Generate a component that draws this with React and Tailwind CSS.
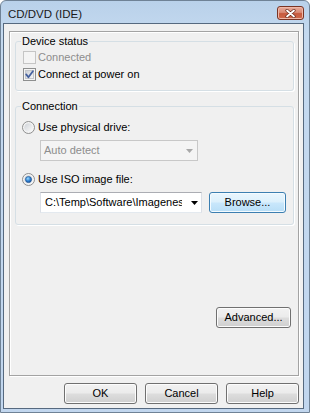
import React from "react";

function CheckBox({ checked, disabled }) {
  if (disabled) {
    return (
      <svg width="13" height="13" viewBox="0 0 13 13" className="shrink-0">
        <rect x="0.5" y="0.5" width="12" height="12" fill="#f4f4f4" stroke="#c5c5c5" />
      </svg>
    );
  }
  return (
    <svg width="13" height="13" viewBox="0 0 13 13" className="shrink-0">
      <defs>
        <linearGradient id="cbg" x1="0" y1="0" x2="1" y2="1">
          <stop offset="0" stopColor="#cbcfd5" />
          <stop offset="1" stopColor="#f7f7f7" />
        </linearGradient>
      </defs>
      <rect x="0.5" y="0.5" width="12" height="12" fill="#f4f4f4" stroke="#8e8f8f" />
      <rect x="2.5" y="2.5" width="8" height="8" fill="url(#cbg)" stroke="#c3c6cb" />
      {checked && (
        <path d="M3.2 6.4 L5.4 9.2 L9.9 3.3" fill="none" stroke="#44609f" strokeWidth="1.8" strokeLinecap="round" strokeLinejoin="round" />
      )}
    </svg>
  );
}

function Radio({ checked, id }) {
  return (
    <svg width="13" height="13" viewBox="0 0 13 13" className="shrink-0">
      <defs>
        <linearGradient id={`rg${id}`} x1="0" y1="0" x2="1" y2="1">
          <stop offset="0" stopColor="#ced2d7" />
          <stop offset="1" stopColor="#fbfbfb" />
        </linearGradient>
        <radialGradient id={`rb${id}`} cx="0.4" cy="0.35" r="0.7">
          <stop offset="0" stopColor="#9fdcfd" />
          <stop offset="0.55" stopColor="#2e82d4" />
          <stop offset="1" stopColor="#174c92" />
        </radialGradient>
      </defs>
      <circle cx="6.5" cy="6.5" r="6" fill="#f4f4f4" stroke="#8e8f8f" />
      <circle cx="6.5" cy="6.5" r="4.3" fill={`url(#rg${id})`} />
      {checked && <circle cx="6.5" cy="6.5" r="3.1" fill={`url(#rb${id})`} stroke="#1d4f8c" strokeWidth="0.6" />}
    </svg>
  );
}

function Arrow({ color }) {
  return (
    <svg width="7" height="4" viewBox="0 0 7 4" className="shrink-0">
      <path d="M0 0 H7 L3.5 4 Z" fill={color} />
    </svg>
  );
}

function Button({ children, className = "" }) {
  return (
    <div
      className={`h-[21px] flex items-center justify-center rounded-[3px] border border-[#707070] bg-[linear-gradient(#f2f2f2_0%,#ebebeb_48%,#dddddd_52%,#cfcfcf_100%)] shadow-[inset_0_0_0_1px_#fcfcfc] text-[#000] ${className}`}
    >
      {children}
    </div>
  );
}

export default function App() {
  return (
    <div className="w-[310px] h-[413px] flex flex-col border border-[#6f8296] rounded-t-[6px] bg-[linear-gradient(#b9d1ea_0%,#c4d9ef_8%,#c1d6ee_100%)] font-['Liberation_Sans',Arial,sans-serif] text-[11px] leading-[15px] text-[#000] overflow-hidden">
      {/* Title bar */}
      <div className="h-[22px] shrink-0 flex items-start justify-between pt-[6px] pl-[7px] pr-[5px]">
        <span className="text-[11.5px] leading-[15px] text-[#1a1a1a]">CD/DVD (IDE)</span>
        <div className="w-[27px] h-[14px] -mt-[1px] rounded-[3px] border border-[#7a3424] bg-[linear-gradient(#e9ac9c_0%,#d98a75_45%,#c75a3e_55%,#cf6a4c_100%)] shadow-[inset_0_0_0_1px_#efb8a8] flex items-center justify-center">
          <svg width="11" height="9" viewBox="0 0 11 9">
            <path d="M2 1.5 L9 7.5 M9 1.5 L2 7.5" stroke="#6a2a1c" strokeWidth="3.2" strokeLinecap="round" />
            <path d="M2 1.5 L9 7.5 M9 1.5 L2 7.5" stroke="#ffffff" strokeWidth="1.8" strokeLinecap="round" />
          </svg>
        </div>
      </div>

      {/* Client area */}
      <div className="flex-1 ml-[2px] mr-[5px] mb-[3px] border border-[#56697f] bg-[#f0f0f0] flex flex-col pt-[7px] pl-[5px] pr-[4px] pb-[4px]">
        {/* Panel */}
        <div className="flex-1 flex flex-col border border-[#a3a3a3] shadow-[inset_1px_1px_0_#ffffff,1px_1px_0_#ffffff]">
          {/* Device status */}
          <fieldset className="mt-[2px] ml-[5px] mr-[4px] border border-[#d5dfe5] rounded-[3px] pb-[7px] shadow-[1px_1px_0_#ffffff]">
            <legend className="ml-[5px] px-[1px] leading-[15px]">Device status</legend>
            <div className="h-[17px] flex items-center pl-[7px] gap-[2px]">
              <CheckBox disabled />
              <span className="text-[#8d8d8d]">Connected</span>
            </div>
            <div className="h-[17px] flex items-center pl-[7px] gap-[2px]">
              <CheckBox checked />
              <span>Connect at power on</span>
            </div>
          </fieldset>

          {/* Connection */}
          <fieldset className="mt-[8px] ml-[5px] mr-[4px] border border-[#d5dfe5] rounded-[3px] pb-[11px] shadow-[1px_1px_0_#ffffff]">
            <legend className="ml-[5px] px-[1px] leading-[15px]">Connection</legend>
            <div className="mt-[5px] h-[17px] flex items-center pl-[6px] gap-[3px]">
              <Radio id="a" />
              <span>Use physical drive:</span>
            </div>
            <div className="mt-[4px] ml-[24px] w-[158px] h-[21px] border border-[#c8c8c8] bg-[#f4f4f4] flex items-center">
              <span className="flex-1 pl-[3px] text-[#8d8d8d]">Auto detect</span>
              <span className="mr-[4px] flex items-center">
                <Arrow color="#a8a8a8" />
              </span>
            </div>
            <div className="mt-[10px] h-[17px] flex items-center pl-[6px] gap-[3px]">
              <Radio id="b" checked />
              <span>Use ISO image file:</span>
            </div>
            <div className="mt-[4px] ml-[24px] flex items-center">
              <div className="w-[162px] h-[21px] border border-[#abadb3] border-l-[#dbdfe6] border-r-[#dbdfe6] border-b-[#e3e9ef] bg-white flex items-center">
                <span className="w-[141px] pl-[4px] overflow-hidden whitespace-nowrap">C:\Temp\Software\Imagenes</span>
                <span className="ml-[9px] flex items-center">
                  <Arrow color="#000000" />
                </span>
              </div>
              <div className="ml-[7px] w-[77px] h-[21px] flex items-center justify-center rounded-[3px] border border-[#3c7fb1] bg-[linear-gradient(#eaf6fd_0%,#dcf0fc_48%,#c9e7fb_52%,#b8def7_100%)] shadow-[inset_0_0_0_1px_#f4fbff]">
                Browse...
              </div>
            </div>
          </fieldset>

          <div className="flex-1" />
          <div className="flex justify-end pr-[7px] pb-[47px]">
            <Button className="w-[75px]">Advanced...</Button>
          </div>
        </div>

        {/* Bottom buttons */}
        <div className="mt-[7px] flex justify-end gap-[8px]">
          <Button className="w-[73px]">OK</Button>
          <Button className="w-[73px]">Cancel</Button>
          <Button className="w-[73px]">Help</Button>
        </div>
      </div>
    </div>
  );
}
